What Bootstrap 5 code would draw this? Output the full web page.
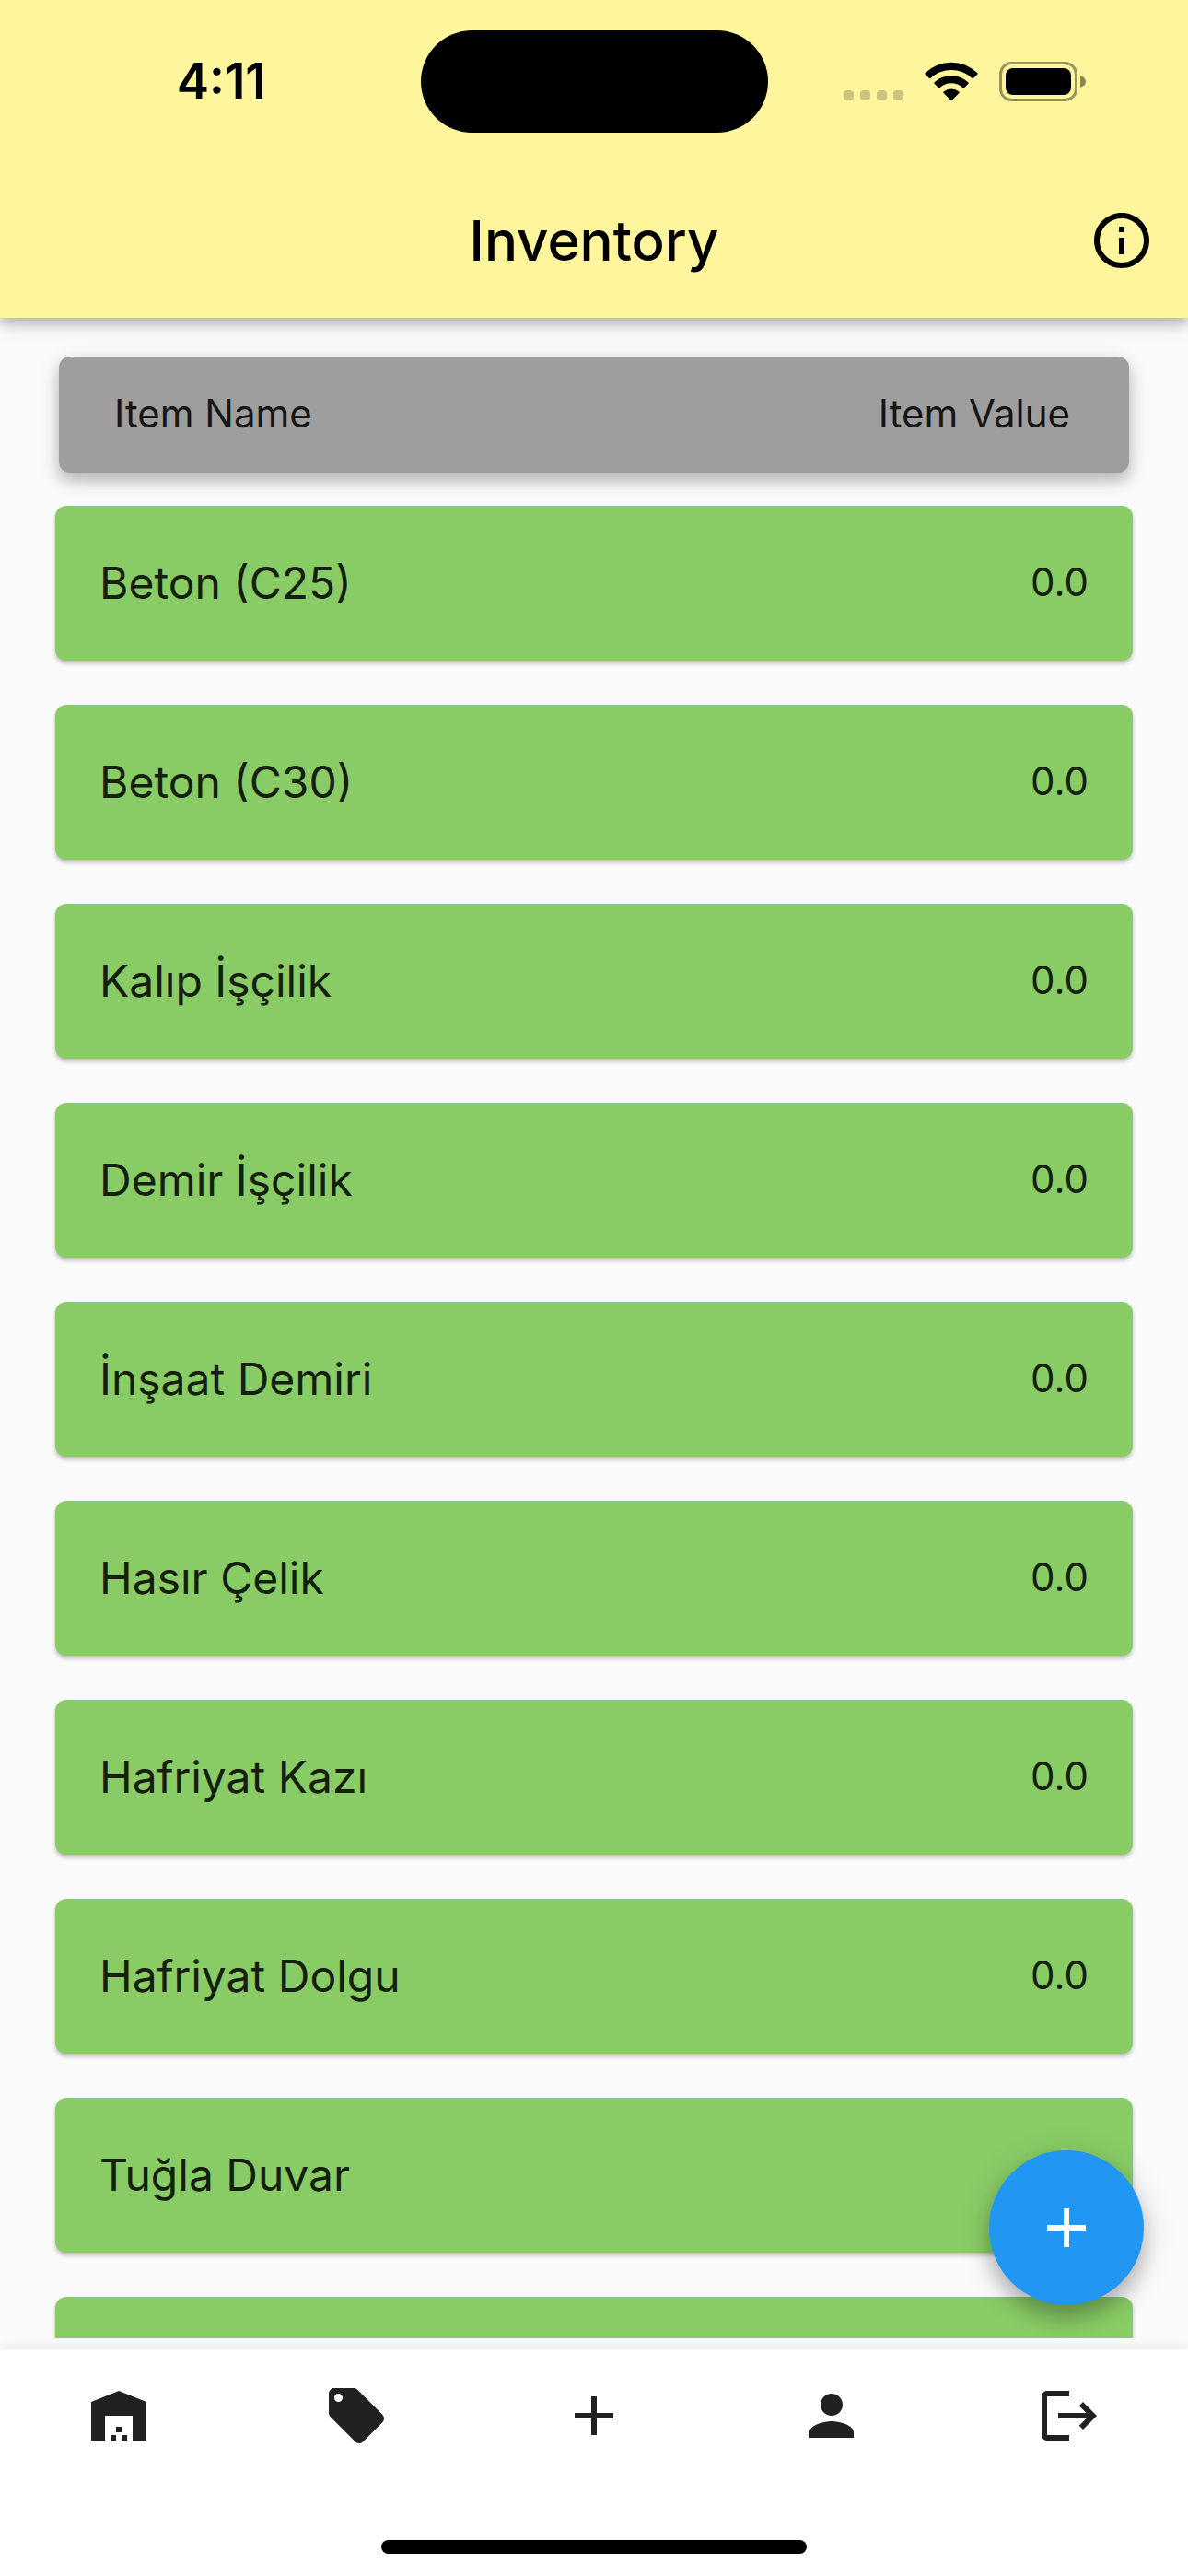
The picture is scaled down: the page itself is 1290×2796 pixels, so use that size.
<!DOCTYPE html>
<html lang="en">
<head>
<meta charset="utf-8">
<meta name="viewport" content="width=device-width, initial-scale=1">
<title>Inventory</title>
<link href="https://cdn.jsdelivr.net/npm/bootstrap@5.3.0/dist/css/bootstrap.min.css" rel="stylesheet">
<style>
  body { font-family: Inter, "Noto Sans", sans-serif; background: #fafafa; color: #1c1c1c; }
  .app-shell { height: 100vh; }
  .app-header { background: #fff59d; color: #000; z-index: 2; box-shadow: 0 6px 12px rgba(0,0,0,.22), 0 6px 24px rgba(0,0,0,.12); }
  .status-bar { height: 177px; padding-top: 33px; }
  .status-side { height: 110px; }
  .clock { font-size: 53px; line-height: 60px; font-weight: 600; padding-left: 24px; }
  .island { width: 377px; height: 111px; background: #000; }
  .signals { gap: 23px; padding-right: 110px; }
  .title-bar { height: 168px; padding: 0 36px; }
  .title-bar h1 { font-size: 60px; line-height: 72px; font-weight: 500; }
  .icon { width: 72px; height: 72px; display: block; fill: currentColor; }
  .icon-btn { border: 0; padding: 0; background: none; color: inherit; }
  .list-head { margin: 42px 64px 0; padding: 0 64px 2px 60px; height: 126px; border-radius: 12px; background: #9e9e9e; color: #161616; font-size: 42px; line-height: 54px; box-shadow: 0 9px 15px rgba(0,0,0,.2), 0 6px 24px rgba(0,0,0,.12); }
  .item-list { padding: 36px 60px 48px; gap: 48px; overflow-y: auto; scrollbar-width: none; min-height: 0; }
  .item-list::-webkit-scrollbar { display: none; }
  .item-row { height: 168px; padding: 0 48px; border-radius: 12px; background: #89cc65; color: #151f10; box-shadow: 0 3px 4px rgba(0,0,0,.26); }
  .item-name { font-size: 48px; line-height: 60px; }
  .item-value { font-size: 42px; line-height: 54px; padding-bottom: 2px; }
  .content-area { min-height: 0; padding-bottom: 12px; }
  .fab { right: 48px; bottom: 48px; width: 168px; height: 168px; border: 0; background: #2196f3; color: #fff; box-shadow: 0 15px 20px rgba(0,0,0,.2), 0 6px 36px rgba(0,0,0,.16); }
  .tab-bar { background: #fff; color: #212121; box-shadow: 0 -2px 12px rgba(0,0,0,.08); }
  .tab-bar a { height: 144px; color: inherit; }
  .home-zone { height: 102px; padding-bottom: 24px; }
  .home-pill { width: 462px; height: 15px; background: #000; }
</style>
</head>
<body>
<div class="app-shell d-flex flex-column overflow-hidden">
  <header class="app-header position-relative">
    <div class="status-bar d-flex">
      <div class="status-side col d-flex align-items-center justify-content-center"><span class="clock">4:11</span></div>
      <div class="island flex-shrink-0 rounded-pill"></div>
      <div class="status-side col d-flex align-items-center justify-content-end">
        <div class="signals d-flex">
          <svg width="65" height="43" viewBox="0 0 65 43" fill="#000" fill-opacity=".2" aria-hidden="true"><rect y="31" width="11" height="11" rx="4"/><rect x="18" y="31" width="11" height="11" rx="4"/><rect x="36" y="31" width="11" height="11" rx="4"/><rect x="54" y="31" width="11" height="11" rx="4"/></svg>
          <svg width="58" height="43" viewBox="0 0 58 43" aria-hidden="true"><path d="M.6 12.2Q0 12.8.6 13.500l4.400 4.400q.7.600 1.400 0a33 33 0 0 1 45.200 0q.7.600 1.400 0l4.400-4.400q.6-.7 0-1.300a41 41 0 0 0-56.800 0zM10.500 22.500q-.6.700 0 1.300l4.500 4.500q.7.600 1.400 0a18.500 18.500 0 0 1 25.200 0q.7.600 1.400 0l4.500-4.500q.6-.6 0-1.300a27 27 0 0 0-37 0zM20.600 32.600q-.6.700 0 1.300l7.700 7.800q.7.600 1.400 0l7.700-7.800q.6-.6 0-1.300a13 13 0 0 0-16.800 0z"/></svg>
          <svg width="95" height="43" viewBox="0 0 95 43" aria-hidden="true"><rect x="1.500" y="1.500" width="82" height="40" rx="12" fill="none" stroke="#000" stroke-opacity=".4" stroke-width="3"/><rect x="7" y="7" width="71" height="29" rx="8"/><path d="M88 15q6 2 6 6.500t-6 6.500z" fill-opacity=".45"/></svg>
        </div>
      </div>
    </div>
    <div class="title-bar d-flex align-items-center justify-content-between">
      <span class="icon"></span>
      <h1 class="m-0">Inventory</h1>
      <button class="icon-btn" type="button" aria-label="Information"><svg class="icon" viewBox="0 0 24 24"><path d="M11 7h2v2h-2zm0 4h2v6h-2zm1-9C6.480 2 2 6.480 2 12s4.480 10 10 10 10-4.480 10-10S17.520 2 12 2zm0 18c-4.410 0-8-3.590-8-8s3.590-8 8-8 8 3.590 8 8-3.590 8-8 8z"/></svg></button>
    </div>
  </header>

  <main class="content-area position-relative d-flex flex-column flex-grow-1">
    <div class="list-head flex-shrink-0 d-flex align-items-center justify-content-between"><span>Item Name</span><span>Item Value</span></div>
    <ul class="item-list list-unstyled m-0 d-flex flex-column flex-grow-1">
      <li class="item-row flex-shrink-0 d-flex align-items-center justify-content-between"><span class="item-name">Beton (C25)</span><span class="item-value">0.0</span></li>
      <li class="item-row flex-shrink-0 d-flex align-items-center justify-content-between"><span class="item-name">Beton (C30)</span><span class="item-value">0.0</span></li>
      <li class="item-row flex-shrink-0 d-flex align-items-center justify-content-between"><span class="item-name">Kalıp İşçilik</span><span class="item-value">0.0</span></li>
      <li class="item-row flex-shrink-0 d-flex align-items-center justify-content-between"><span class="item-name">Demir İşçilik</span><span class="item-value">0.0</span></li>
      <li class="item-row flex-shrink-0 d-flex align-items-center justify-content-between"><span class="item-name">İnşaat Demiri</span><span class="item-value">0.0</span></li>
      <li class="item-row flex-shrink-0 d-flex align-items-center justify-content-between"><span class="item-name">Hasır Çelik</span><span class="item-value">0.0</span></li>
      <li class="item-row flex-shrink-0 d-flex align-items-center justify-content-between"><span class="item-name">Hafriyat Kazı</span><span class="item-value">0.0</span></li>
      <li class="item-row flex-shrink-0 d-flex align-items-center justify-content-between"><span class="item-name">Hafriyat Dolgu</span><span class="item-value">0.0</span></li>
      <li class="item-row flex-shrink-0 d-flex align-items-center justify-content-between"><span class="item-name">Tuğla Duvar</span></li>
      <li class="item-row flex-shrink-0"></li>
    </ul>
    <button class="fab position-absolute rounded-circle d-flex align-items-center justify-content-center p-0" type="button" aria-label="Add item"><svg class="icon" viewBox="0 0 24 24"><path d="M19 13h-6v6h-2v-6H5v-2h6V5h2v6h6z"/></svg></button>
  </main>

  <nav class="tab-bar" aria-label="Main">
    <div class="d-flex">
      <a class="col d-flex align-items-center justify-content-center" href="#" aria-label="Warehouse"><svg class="icon" viewBox="0 0 24 24"><path d="M2 21V7l10-4 10 4v14h-5v-9H7v9zM9 19h2v2H9zM13 19h2v2h-2zM11 16h2v2h-2z"/></svg></a>
      <a class="col d-flex align-items-center justify-content-center" href="#" aria-label="Prices"><svg class="icon" viewBox="0 0 24 24"><path d="M21.410 11.580l-9-9C12.050 2.220 11.550 2 11 2H4c-1.100 0-2 .9-2 2v7c0 .55.220 1.050.590 1.420l9 9c.36.360.860.580 1.410.580s1.050-.22 1.410-.590l7-7c.37-.36.590-.860.590-1.410s-.23-1.060-.590-1.420zM5.500 7C4.670 7 4 6.330 4 5.500S4.670 4 5.500 4 7 4.670 7 5.500 6.330 7 5.500 7z"/></svg></a>
      <a class="col d-flex align-items-center justify-content-center" href="#" aria-label="Add"><svg class="icon" viewBox="0 0 24 24"><path d="M19 13h-6v6h-2v-6H5v-2h6V5h2v6h6z"/></svg></a>
      <a class="col d-flex align-items-center justify-content-center" href="#" aria-label="Profile"><svg class="icon" viewBox="0 0 24 24"><path d="M12 12c2.210 0 4-1.790 4-4s-1.790-4-4-4-4 1.790-4 4 1.790 4 4 4zm0 2c-2.670 0-8 1.340-8 4v2h16v-2c0-2.660-5.330-4-8-4z"/></svg></a>
      <a class="col d-flex align-items-center justify-content-center" href="#" aria-label="Log out"><svg class="icon" viewBox="0 0 24 24"><path d="M17 7l-1.410 1.410L18.170 11H8v2h10.170l-2.580 2.580L17 17l5-5zM4 5h8V3H4c-1.100 0-2 .9-2 2v14c0 1.100.9 2 2 2h8v-2H4z"/></svg></a>
    </div>
    <div class="home-zone d-flex align-items-end justify-content-center"><div class="home-pill rounded-pill"></div></div>
  </nav>
</div>
<script src="https://cdn.jsdelivr.net/npm/bootstrap@5.3.0/dist/js/bootstrap.bundle.min.js"></script>
</body>
</html>
